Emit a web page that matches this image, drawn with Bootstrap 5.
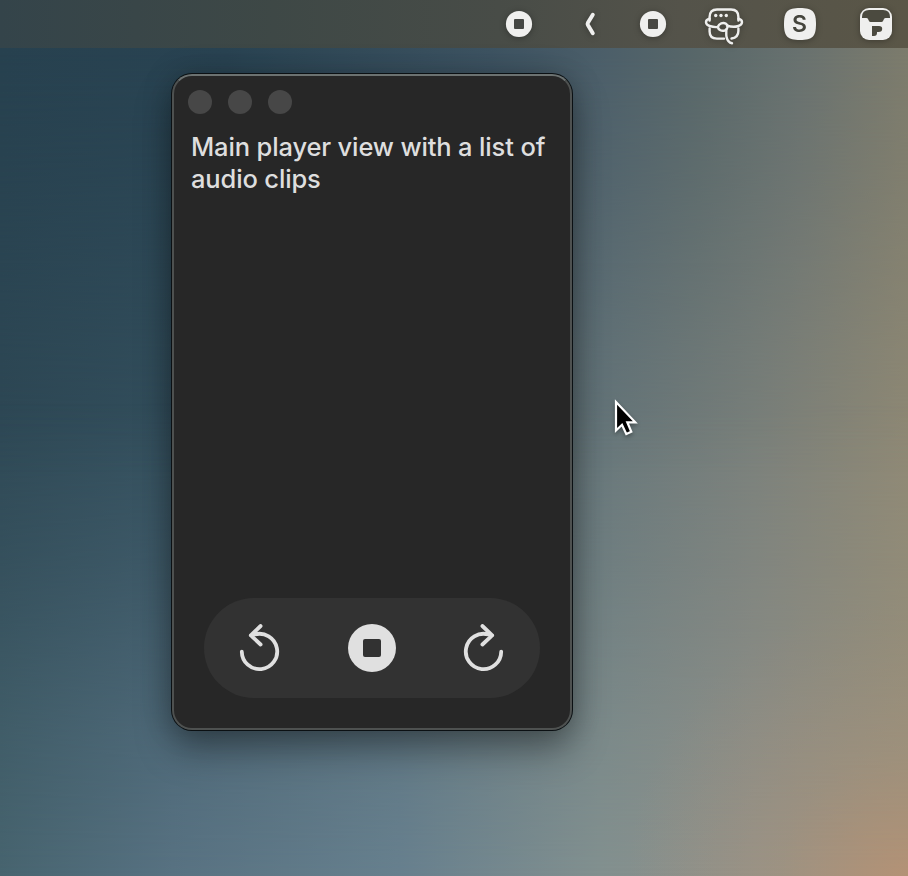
<!DOCTYPE html>
<html lang="en">
<head>
<meta charset="utf-8">
<meta name="viewport" content="width=device-width, initial-scale=1">
<title>Audio player</title>
<link href="https://cdn.jsdelivr.net/npm/bootstrap@5.3.0/dist/css/bootstrap.min.css" rel="stylesheet">
<style>
  body {
    font-family: Inter, "Liberation Sans", sans-serif;
    background: linear-gradient(90deg, #2e4855 0%, #34505e 20%, #50646d 45%, #66767a 66%, #7a807b 83%, #8f8975 100%);
  }
  /* wallpaper: the upper and lower tints fade into the middle one */
  body::before, body::after { content: ""; position: absolute; inset: 0; z-index: -1; }
  body::before {
    background: linear-gradient(90deg, #27414f 0%, #294352 25%, #3d5362 54%, #4b5e69 66%, #586769 77%, #68716f 88%, #7c7b6c 100%);
    -webkit-mask-image: linear-gradient(#000 6%, rgba(0,0,0,.75) 20%, rgba(0,0,0,.25) 40%, transparent 54%);
    mask-image: linear-gradient(#000 6%, rgba(0,0,0,.75) 20%, rgba(0,0,0,.25) 40%, transparent 54%);
  }
  body::after {
    background:
      radial-gradient(circle 280px at 100% 100%, rgba(184,146,116,.85), rgba(176,148,122,.4) 45%, rgba(165,150,128,0)),
      linear-gradient(90deg, #47646f 0%, #587282 19%, #67808e 44%, #82908f 66%, #90918a 83%, #98917f 100%);
    -webkit-mask-image: linear-gradient(transparent 46%, rgba(0,0,0,.3) 64%, rgba(0,0,0,.75) 84%, #000 100%);
    mask-image: linear-gradient(transparent 46%, rgba(0,0,0,.3) 64%, rgba(0,0,0,.75) 84%, #000 100%);
  }
  .menu-strip {
    height: 48px; padding-right: 16px; gap: 40px; flex: none;
    background: linear-gradient(90deg, #34444a 0%, #3e4846 30%, #484c47 55%, #54534a 75%, #5a5647 100%);
  }
  .menu-strip svg { display: block; filter: drop-shadow(0 1px 3px rgba(0,0,0,.3)); overflow: visible; }
  .player {
    width: 400px; height: 656px; margin: 26px 0 0 172px;
    padding: 14px 14px 30px; border-radius: 20px;
    background: #272727; border: 2px solid #4e5150; border-top-color: #6c7271;
    box-shadow: 0 0 0 1px #0b1013, 0 20px 36px rgba(0,0,0,.34), 0 0 30px rgba(0,0,0,.22);
  }
  .dot { width: 24px; height: 24px; background: #474747; }
  .caption-text { font-size: 25.5px; font-weight: 500; line-height: 32px; letter-spacing: -.15px; color: #dedede; margin: 17px -12px 0 3px; }
  .controls { height: 100px; margin: 0 16px; padding: 0 32px; background: #323232; }
  .controls .btn { width: 48px; height: 48px; color: #e0e0e0; }
  .pointer { position: absolute; left: 608px; top: 394px; filter: drop-shadow(0 2px 2px rgba(0,0,0,.35)); }
</style>
</head>
<body class="vh-100 overflow-hidden d-flex flex-column position-relative z-0">
<nav class="menu-strip d-flex align-items-center justify-content-end" aria-label="Menu bar">
  <svg width="26" height="26" viewBox="0 0 26 26"><circle cx="13" cy="13" r="13.1" fill="#efefee"/><rect x="8" y="8" width="10" height="10" rx="1" fill="#454744"/></svg>
  <svg width="28" height="26" viewBox="0 0 28 26"><path d="M20.800 3.700 15.900 11.800Q15.300 12.900 15.900 14L20.800 22.300" fill="none" stroke="#efefee" stroke-width="3.900" stroke-linecap="round"/></svg>
  <svg width="26" height="26" viewBox="0 0 26 26"><circle cx="13" cy="13" r="13.1" fill="#efefee"/><rect x="8" y="8" width="10" height="10" rx="1" fill="#484843"/></svg>
  <svg width="38" height="38" viewBox="706 5 38 38" fill="none" stroke="#efefee" stroke-width="2.4" stroke-linecap="round" stroke-linejoin="round">
    <path d="M709.600 20.500V17Q709.600 9.500 717 9.500H731Q738.400 9.500 738.400 17V20.500"/>
    <path d="M709.600 28.500V31.500Q709.600 38.600 717 38.600H724M731.500 38.500Q738.400 37.600 738.400 31V28.500"/>
    <path d="M709.600 18.800C704.600 19.800 705 24.500 709.600 26C712.600 27 716 27.200 718 27M738.400 18.800C743.400 19.800 743 24.500 738.400 26C734.500 27.300 730.500 26.800 727 25.600"/>
    <path d="M717.800 27C719 23.600 723 22 726 23.800C728.600 25.600 728 28.800 725 30.300C721.800 31.700 718.300 29.800 717.800 27Z"/>
    <path d="M726.200 29.600C726.600 32 725.900 34.200 726.500 36.800C727.300 40.700 729.200 42.800 732 43.300"/>
    <g fill="#efefee" stroke="none"><circle cx="715.700" cy="15.500" r="1.700"/><circle cx="721" cy="15.500" r="1.700"/><circle cx="726.300" cy="15.500" r="1.700"/></g>
  </svg>
  <svg width="36" height="32" viewBox="0 0 36 32"><path d="M16 0C28.500 0 32 3.500 32 16S28.500 32 16 32 0 28.500 0 16 3.500 0 16 0Z" fill="#efefee"/><text x="15.600" y="24" text-anchor="middle" font-family="Inter, sans-serif" font-size="23" font-weight="600" fill="#45453d">S</text></svg>
  <svg width="32" height="32" viewBox="0 0 32 32"><rect width="32" height="32" rx="9" fill="#efefee"/><path d="M2 10V9Q2 2 9 2H23Q30 2 30 9V10H25.500Q24 10 23.500 12Q23 14 21.500 14H10.500Q9 14 8.500 12Q8 10 6.500 10Z" fill="#4b4a3f"/><path d="M12 18H19Q22.200 18 22.200 20.700Q22.200 24 18.500 24H17V25Q17 28 14 28H12Z" fill="#4b4a3f"/></svg>
</nav>

<main class="player d-flex flex-column">
  <div class="d-flex gap-3">
    <span class="dot rounded-circle"></span><span class="dot rounded-circle"></span><span class="dot rounded-circle"></span>
  </div>
  <p class="caption-text mb-0">Main player view with a list of<br>audio clips</p>
  <div class="controls rounded-pill d-flex align-items-center justify-content-between mt-auto">
    <button class="btn p-0 border-0" type="button" aria-label="Back">
      <svg class="d-block" width="48" height="48" viewBox="236 624 48 48" fill="none" stroke="currentColor" stroke-width="3.800" stroke-linecap="round" stroke-linejoin="round"><path d="M241.800 651.700A17.700 17.700 0 1 0 254.500 634.500L250.800 635.300M260.600 626 250.800 635.300 260.600 644.500"/></svg>
    </button>
    <button class="btn p-0 border-0" type="button" aria-label="Stop">
      <svg class="d-block" width="48" height="48" viewBox="0 0 48 48"><circle cx="24" cy="24" r="24" fill="currentColor"/><rect x="15" y="15" width="18" height="18" rx="2" fill="#323232"/></svg>
    </button>
    <button class="btn p-0 border-0" type="button" aria-label="Forward">
      <svg class="d-block" width="48" height="48" viewBox="236 624 48 48" fill="none" stroke="currentColor" stroke-width="3.800" stroke-linecap="round" stroke-linejoin="round"><g transform="translate(519 0) scale(-1 1)"><path d="M241.800 651.700A17.700 17.700 0 1 0 254.500 634.500L250.800 635.300M260.600 626 250.800 635.300 260.600 644.500"/></g></svg>
    </button>
  </div>
</main>

<svg class="pointer" width="36" height="46" viewBox="608 394 36 46"><path d="M616 402V430.500L622 424.800 626.300 434 631.300 431.800 627.300 422.300H635.300Z" fill="#000" stroke="#fff" stroke-width="2.200"/></svg>
<script src="https://cdn.jsdelivr.net/npm/bootstrap@5.3.0/dist/js/bootstrap.bundle.min.js"></script>
</body>
</html>
